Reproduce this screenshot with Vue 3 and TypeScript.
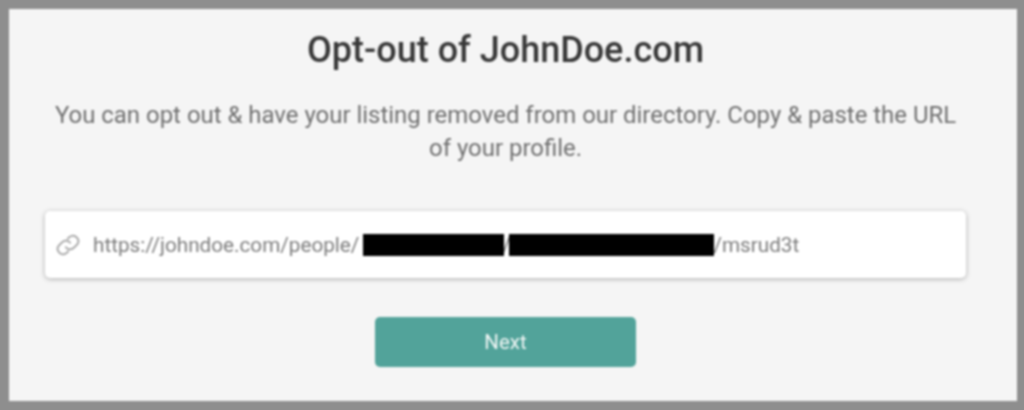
<script setup lang="ts">
const title = 'Opt-out of JohnDoe.com'
</script>

<template>
  <div class="frame">
    <main class="panel">
      <h1 class="title">{{ title }}</h1>
      <p class="lead">You can opt out &amp; have your listing removed from our directory. Copy &amp; paste the URL of your profile.</p>
      <div class="field">
        <svg class="icon" viewBox="0 0 24 24" fill="none" stroke="#a0a0a0" stroke-width="1.6" stroke-linecap="round" stroke-linejoin="round">
          <path d="M10 14a5 5 0 0 0 7.5.5l3-3a5 5 0 0 0-7-7l-1.7 1.7" />
          <path d="M14 10a5 5 0 0 0-7.5-.5l-3 3a5 5 0 0 0 7 7l1.7-1.7" />
        </svg>
        <div class="url">https://johndoe.com/people/<span class="redact first"></span>/<span class="redact second"></span>/msrud3t</div>
      </div>
      <button class="next" type="button">Next</button>
    </main>
  </div>
</template>

<style>
html, body { margin: 0; background: #8e8e8e; }
</style>

<style scoped>
.frame {
  width: 1024px;
  height: 410px;
  box-sizing: border-box;
  padding: 9px 7px 9px 9px;
  background: #8e8e8e;
  overflow: hidden;
}
.panel {
  height: 100%;
  box-sizing: border-box;
  background: #f5f5f5;
  display: flex;
  flex-direction: column;
  align-items: center;
  padding: 20px 15px 0 0;
  font-family: Roboto, "Noto Sans", sans-serif;
  filter: blur(0.8px);
}
.title {
  margin: 0;
  font-size: 36px;
  line-height: 42px;
  font-weight: 500;
  color: #383838;
}
.lead {
  width: 920px;
  margin: 28px 0 0;
  text-align: center;
  font-size: 23.95px;
  line-height: 33px;
  color: #6f6f6f;
}
.field {
  width: 921px;
  height: 67px;
  margin: 46px 0 0;
  box-sizing: border-box;
  padding-left: 10px;
  display: flex;
  align-items: center;
  gap: 12px;
  background: #fff;
  border-radius: 5px;
  box-shadow: 0 1px 5px rgba(0, 0, 0, 0.3);
}
.icon { width: 26px; height: 26px; flex: none; }
.url {
  display: flex;
  align-items: center;
  font-size: 20.7px;
  color: #7d7d7d;
}
.redact { display: block; height: 22px; background: #000; position: relative; }
.first { width: 141px; margin-left: 3.5px; margin-right: -1.5px; }
.second { width: 205px; margin-left: -1.5px; margin-right: -1px; }
.next {
  width: 261px;
  height: 50px;
  margin-top: 39px;
  border: 0;
  border-radius: 5px;
  background: #52a39a;
  color: #f2f7f6;
  font: 400 20.5px Roboto, sans-serif;
}
</style>
